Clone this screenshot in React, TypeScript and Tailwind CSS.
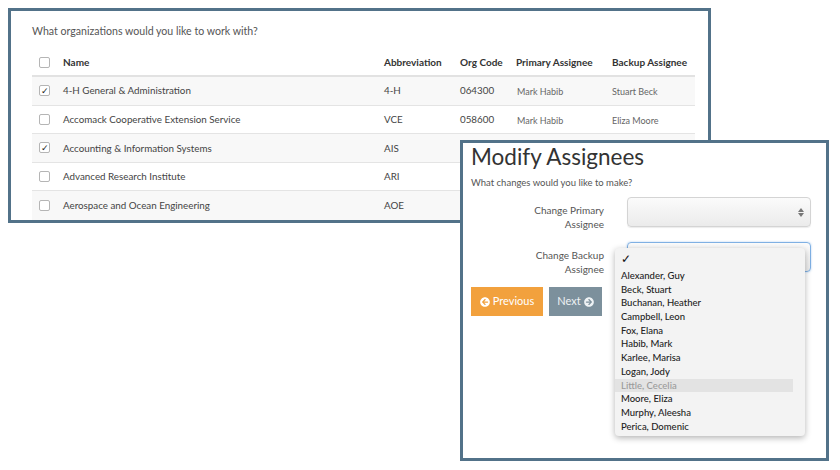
import { FaArrowCircleLeft, FaArrowCircleRight } from "react-icons/fa";

type Org = {
  name: string;
  abbr: string;
  code: string;
  primary: string;
  backup: string;
  checked: boolean;
};

const orgs: Org[] = [
  { name: "4-H General & Administration", abbr: "4-H", code: "064300", primary: "Mark Habib", backup: "Stuart Beck", checked: true },
  { name: "Accomack Cooperative Extension Service", abbr: "VCE", code: "058600", primary: "Mark Habib", backup: "Eliza Moore", checked: false },
  { name: "Accounting & Information Systems", abbr: "AIS", code: "", primary: "", backup: "", checked: true },
  { name: "Advanced Research Institute", abbr: "ARI", code: "", primary: "", backup: "", checked: false },
  { name: "Aerospace and Ocean Engineering", abbr: "AOE", code: "", primary: "", backup: "", checked: false },
];

const people = [
  "Alexander, Guy",
  "Beck, Stuart",
  "Buchanan, Heather",
  "Campbell, Leon",
  "Fox, Elana",
  "Habib, Mark",
  "Karlee, Marisa",
  "Logan, Jody",
  "Little, Cecelia",
  "Moore, Eliza",
  "Murphy, Aleesha",
  "Perica, Domenic",
];

const cols = "grid grid-cols-[31px_321px_76px_56px_96px_83px] items-center";

function Box({ checked }: { checked?: boolean }) {
  return (
    <div className="ml-[7px] w-[11px] h-[11px] rounded-[2px] border border-[#b5b5b5] bg-white flex items-center justify-center text-[9px] leading-none text-[#222]">
      {checked ? "✓" : null}
    </div>
  );
}

function Arrows() {
  return (
    <div className="flex flex-col items-center gap-[1px]">
      <div className="w-0 h-0 border-x-[3px] border-x-transparent border-b-[4px] border-b-[#777]" />
      <div className="w-0 h-0 border-x-[3px] border-x-transparent border-t-[4px] border-t-[#777]" />
    </div>
  );
}

export default function App() {
  return (
    <div
      className="relative w-[840px] h-[470px] bg-white overflow-hidden text-[#444]"
      style={{ fontFamily: "Lato, 'Open Sans', sans-serif" }}
    >
      {/* organizations panel */}
      <div className="mt-[8px] ml-[8px] w-[703px] h-[215px] border-[3px] border-[#527289] bg-white">
        <div className="ml-[21px] pt-[12px] text-[10.6px] leading-[16px] text-[#555]">
          What organizations would you like to work with?
        </div>
        <div className="ml-[21px] mt-[11px] w-[663px]">
          <div className={`${cols} h-[27px] border-b-2 border-[#e2e2e2] text-[10px] font-bold text-[#333]`}>
            <Box />
            <div>Name</div>
            <div>Abbreviation</div>
            <div>Org Code</div>
            <div>Primary Assignee</div>
            <div>Backup Assignee</div>
          </div>
          {orgs.map((o, i) => (
            <div
              key={o.name}
              className={`${cols} h-[28.6px] text-[9.8px] ${i % 2 === 0 ? "bg-[#f8f8f8]" : "bg-white"} ${i < orgs.length - 1 ? "border-b border-[#e4e4e4]" : ""}`}
            >
              <Box checked={o.checked} />
              <div>{o.name}</div>
              <div>{o.abbr}</div>
              <div>{o.code}</div>
              <div className="text-[9px] text-[#666] pl-[1px] pt-[2px]">{o.primary}</div>
              <div className="text-[9px] text-[#666] pt-[2px]">{o.backup}</div>
            </div>
          ))}
        </div>
      </div>

      {/* modify assignees modal */}
      <div className="absolute left-[460px] top-[140px] w-[369px] h-[321px] border-[3px] border-[#527289] bg-white">
        <div className="pl-[8px]">
          <div className="text-[22.5px] leading-[28px] font-normal text-[#333]">Modify Assignees</div>
          <div className="mt-[5px] text-[9.5px] leading-[14px] text-[#555]">What changes would you like to make?</div>

          <div className="mt-[7px] h-[30px] flex items-start">
            <div className="w-[133px] mt-[7px] text-right text-[10px] leading-[13.5px] text-[#555]">
              Change Primary
              <br />
              Assignee
            </div>
            <div className="ml-[23px] w-[184px] h-[30px] rounded-[4px] border border-[#d4d4d4] bg-gradient-to-b from-[#fbfbfb] to-[#ebebeb] shadow-[0_1px_1px_rgba(0,0,0,0.08)] flex items-center justify-end pr-[6px]">
              <Arrows />
            </div>
          </div>

          <div className="mt-[15px] h-[30px] flex items-start">
            <div className="w-[133px] mt-[7px] text-right text-[10px] leading-[13.5px] text-[#555]">
              Change Backup
              <br />
              Assignee
            </div>
            <div className="ml-[23px] w-[184px] h-[30px] rounded-[4px] border border-[#7fb0e3] bg-gradient-to-b from-[#fbfbfb] to-[#ebebeb] shadow-[0_0_2px_rgba(80,150,230,0.5)] flex items-center justify-end pr-[6px]">
              <Arrows />
            </div>
          </div>

          <div className="mt-[15px] flex gap-[6px]">
            <div className="w-[72px] h-[29px] bg-[#f2a13d] text-white text-[11px] flex items-center justify-center gap-[3px]">
              <FaArrowCircleLeft className="w-[10px] h-[10px]" />
              Previous
            </div>
            <div className="w-[53px] h-[29px] bg-[#7c909c] text-[#eef2f4] text-[11px] flex items-center justify-center gap-[3px]">
              Next
              <FaArrowCircleRight className="w-[10px] h-[10px]" />
            </div>
          </div>
        </div>

        {/* open select menu */}
        <div className="absolute left-[152px] top-[105px] w-[190px] h-[188px] rounded-[4px] bg-[#f3f3f3] shadow-[0_2px_6px_rgba(0,0,0,0.3)] pt-[3px]">
          <div className="pl-[6px] h-[16px] text-[12px] leading-[16px] text-[#111]">✓</div>
          <div className="mt-[2px]">
            {people.map((p) => (
              <div
                key={p}
                className={`w-[178px] h-[13.7px] pl-[6px] text-[9.5px] leading-[13.7px] font-medium ${p === "Little, Cecelia" ? "bg-[#e3e3e3] text-[#9a9a9a]" : "text-[#222]"}`}
              >
                {p}
              </div>
            ))}
          </div>
        </div>
      </div>
    </div>
  );
}
